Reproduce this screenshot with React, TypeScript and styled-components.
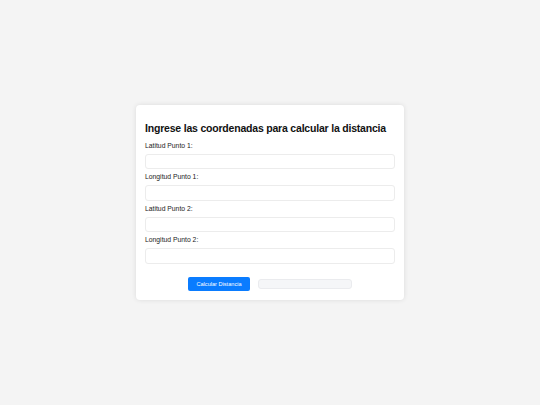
import styled, { createGlobalStyle } from "styled-components";

const GlobalStyle = createGlobalStyle`
    html, body {
        margin: 0;
        padding: 0;
        background: #f4f4f4;
        font-family: "Liberation Sans", Arial, sans-serif;
    }
`;

const Page = styled.div`
    display: flex;
    justify-content: center;
    align-items: center;
    min-height: 405px;
`;

const Card = styled.div`
    width: 250px;
    padding: 9px 9px 9.5px;
    background: #ffffff;
    border-radius: 4px;
    box-shadow: 0 0 5px rgba(0, 0, 0, 0.1);
`;

const Title = styled.h2`
    margin: 8px 0 7.5px;
    font-size: 10.5px;
    line-height: 12px;
    letter-spacing: -0.2px;
    font-weight: bold;
    color: #111;
    white-space: nowrap;
`;

const Label = styled.label`
    display: block;
    font-size: 6.8px;
    line-height: 8px;
    margin-bottom: 4px;
    color: #1a1a1a;
`;

const Input = styled.input`
    display: block;
    box-sizing: border-box;
    width: 100%;
    height: 15.5px;
    margin: 0 0 4px;
    padding: 0 4px;
    border: 1px solid #ececec;
    border-radius: 3px;
    background: #fff;
    font-size: 7px;
    outline: none;
`;

const Actions = styled.div`
    display: flex;
    justify-content: center;
    align-items: center;
    gap: 8px;
    margin-top: 13px;
`;

const Button = styled.button`
    height: 14px;
    padding: 0 8px;
    border: none;
    border-radius: 2px;
    background: #0a7cff;
    color: #fff;
    font-family: "Liberation Sans", Arial, sans-serif;
    font-size: 5.6px;
    line-height: 14px;
    cursor: pointer;
`;

const Result = styled.div`
    box-sizing: border-box;
    width: 94px;
    height: 10px;
    background: #f5f6f8;
    border: 1px solid #eaebee;
    border-radius: 3px;
`;

const fields = ["Latitud Punto 1:", "Longitud Punto 1:", "Latitud Punto 2:", "Longitud Punto 2:"];

export default function App() {
    return (
        <>
            <GlobalStyle />
            <Page>
                <Card>
                    <Title>Ingrese las coordenadas para calcular la distancia</Title>
                    {fields.map((f, i) => (
                        <div key={i}>
                            <Label htmlFor={"f" + i}>{f}</Label>
                            <Input id={"f" + i} type="text" />
                        </div>
                    ))}
                    <Actions>
                        <Button>Calcular Distancia</Button>
                        <Result />
                    </Actions>
                </Card>
            </Page>
        </>
    );
}
